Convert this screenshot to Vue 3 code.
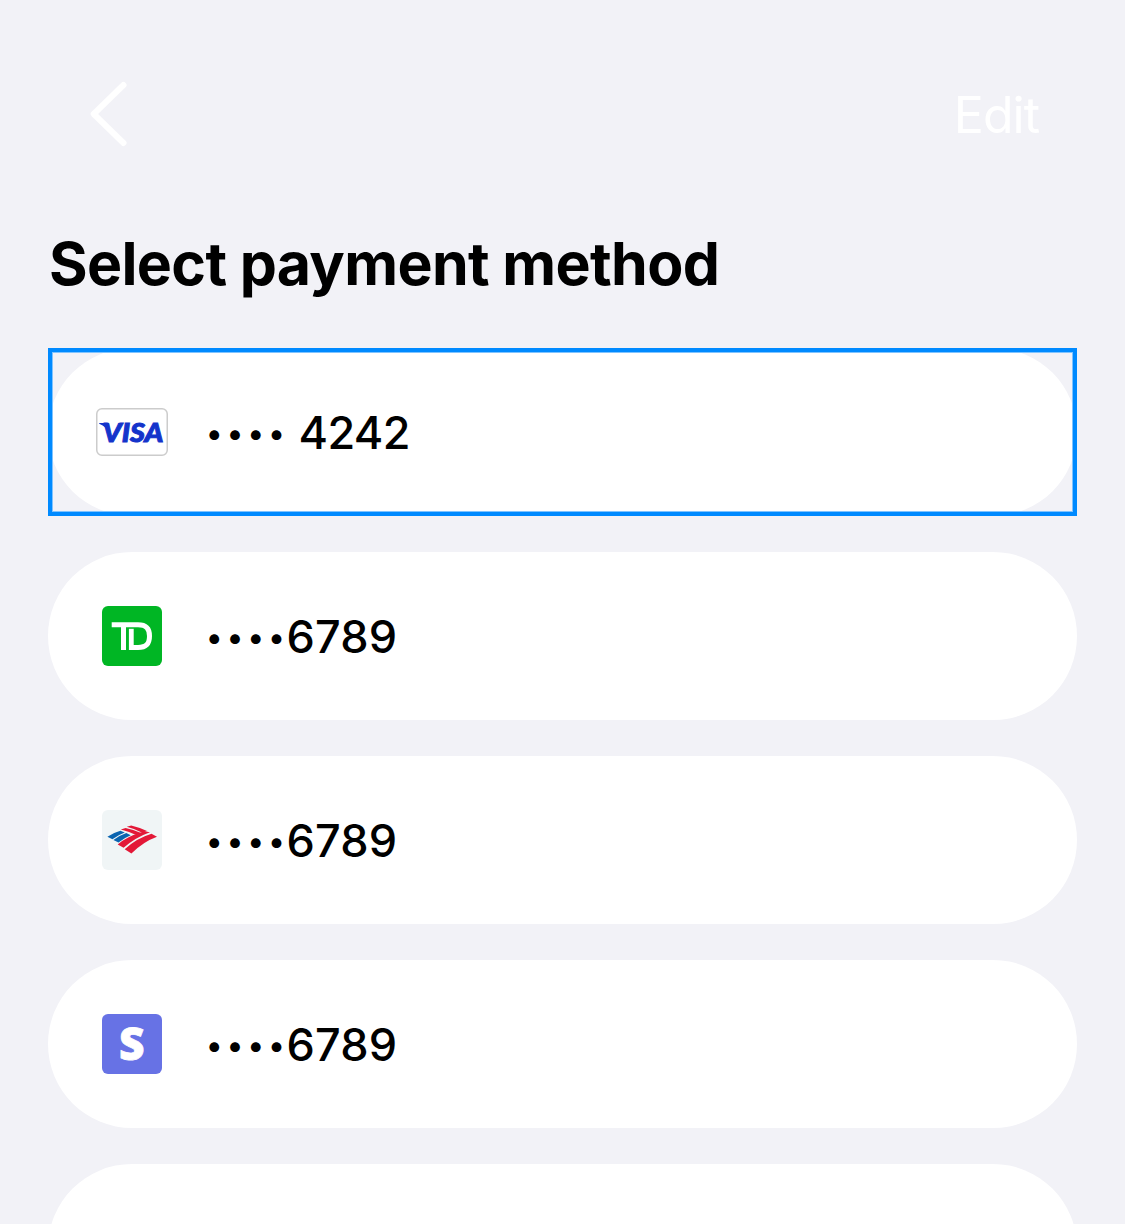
<script setup>
const methods = [
  { id: 1, brand: 'visa', digits: '4242', spaced: true, selected: true },
  { id: 2, brand: 'td', digits: '6789' },
  { id: 3, brand: 'boa', digits: '6789' },
  { id: 4, brand: 'stripe', digits: '6789' },
  { id: 5, brand: '', digits: '' },
]
</script>

<template>
  <main class="screen">
    <header class="bar">
      <svg class="back" viewBox="0 0 40 68" aria-label="Back">
        <path d="M34.5 5 L4.7 34 L34.5 63" />
      </svg>
      <span class="edit">Edit</span>
    </header>
    <h1 class="title">Select payment method</h1>
    <div class="list">
      <div v-for="m in methods" :key="m.id" class="row" :class="{ selected: m.selected }">
        <div class="pill">
          <div class="logo">
            <svg v-if="m.brand === 'visa'" width="72" height="48" viewBox="0 0 72 48">
              <rect x=".75" y=".75" width="70.5" height="46.5" rx="5.2" fill="#fff" stroke="#ccc" stroke-width="1.5" />
              <path d="M3.2 15H12.2L14.5 27Q10.5 18.3 3.2 15.8Z" fill="#1434cb" />
              <text class="visa" x="6.8" y="34.3" textLength="60.5" lengthAdjust="spacingAndGlyphs">VISA</text>
            </svg>
            <svg v-else-if="m.brand === 'td'" width="60" height="60" viewBox="0 0 60 60">
              <rect width="60" height="60" rx="6" fill="#00b624" />
              <g fill="none" stroke="#fff">
                <path d="M9.7 18.8H36C44.5 18.8 47.5 23 47.5 30C47.5 37.5 44.5 41.5 36 41.5H29.4" stroke-width="5" />
                <path d="M21.5 18V44" stroke-width="5" />
                <path d="M29.3 22.8V44" stroke-width="4.8" />
              </g>
            </svg>
            <svg v-else-if="m.brand === 'boa'" width="60" height="60" viewBox="0 0 60 60">
              <rect width="60" height="60" rx="6" fill="#f0f5f6" />
              <g fill="#0a64b0">
                <path d="M5.4 26.8Q12 22.5 18.4 20.8L22.8 22.6Q15.8 25.2 10.4 29.3Z" />
                <path d="M11.4 30Q18 25.3 24.3 23.1L28.7 25.2Q22.3 27.8 16.5 32.4Z" />
              </g>
              <g fill="#e31837">
                <path d="M18.8 19.4L23.6 18.1Q33 20.2 39.8 23.2L34.8 25.3Q28 21.7 18.8 19.4Z" />
                <path d="M24.8 16.8L29.2 15.6Q38 17.8 45 20.9L40.2 22.7Q34 19.2 24.8 16.8Z" />
                <path d="M15.7 34.5Q25 26.6 38.8 22.6L42.5 21.3L48 22.2Q33 27.5 21.6 37.8Z" />
                <path d="M22.7 39.3Q34 28.4 49.5 23.7L55 26.7Q41 31.8 29.4 43.5Z" />
              </g>
            </svg>
            <svg v-else-if="m.brand === 'stripe'" width="60" height="60" viewBox="0 0 60 60">
              <rect width="60" height="60" rx="6" fill="#6772e5" />
              <text class="stripe" x="17" y="46.4" textLength="25.5" lengthAdjust="spacingAndGlyphs">S</text>
            </svg>
          </div>
          <span v-if="m.digits" class="dots">••••</span>
          <span v-if="m.digits" class="digits" :class="{ spaced: m.spaced }">{{ m.digits }}</span>
        </div>
      </div>
    </div>
  </main>
</template>

<style>
body { background: #f2f2f7; overflow: hidden; }
</style>

<style scoped>
.screen {
  box-sizing: border-box;
  width: 1125px;
  height: 1224px;
  overflow: hidden;
  padding: 80px 48px 0;
  background: #f2f2f7;
  color: #000;
  font-family: Inter, "Liberation Sans", sans-serif;
}
.bar {
  display: flex;
  justify-content: space-between;
  height: 70px;
  padding: 0 38px 0 41px;
}
.back { width: 40px; height: 68px; }
.back path {
  fill: none;
  stroke: #fff;
  stroke-width: 6;
  stroke-linecap: round;
  stroke-linejoin: round;
}
.edit {
  color: #fff;
  font-size: 50px;
  line-height: 70px;
  letter-spacing: -1px;
}
.title {
  margin: 78px 0 0 1px;
  height: 120px;
  font-size: 59px;
  font-weight: 700;
  line-height: 72px;
  letter-spacing: -.65px;
  white-space: nowrap;
}
.list { display: flex; flex-direction: column; gap: 36px; }
.row { height: 168px; flex: none; }
.selected { position: relative; }
.selected::after {
  content: "";
  position: absolute;
  inset: 0;
  border: 4px solid #008aff;
  box-shadow: inset 0 0 0 1px #80c4ff;
}
.pill {
  box-sizing: border-box;
  display: flex;
  align-items: center;
  height: 168px;
  padding-left: 48px;
  border-radius: 84px;
  background: #fff;
}
.logo {
  display: flex;
  justify-content: center;
  width: 72px;
  margin-right: 38px;
}
.logo svg { display: block; }
.visa {
  font: italic 900 26.5px Lato, sans-serif;
  fill: #1434cb;
  stroke: #1434cb;
  stroke-width: 1px;
}
.stripe {
  font: 800 44px "Open Sans", sans-serif;
  fill: #fff;
  stroke: #fff;
  stroke-width: .8px;
}
.dots {
  width: 80.5px;
  padding-top: 2px;
  font-size: 31px;
  font-weight: 500;
  line-height: 60px;
  letter-spacing: 4.25px;
  white-space: nowrap;
}
.digits {
  padding-top: 2px;
  font-size: 45px;
  font-weight: 500;
  line-height: 60px;
  letter-spacing: .2px;
  white-space: nowrap;
}
.spaced { margin-left: 12px; letter-spacing: -.6px; }
</style>
